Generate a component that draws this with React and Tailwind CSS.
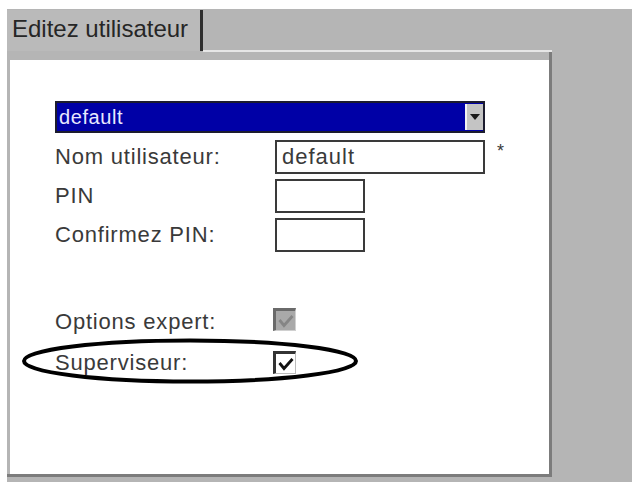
import React from 'react';

const font = { fontFamily: '"Liberation Sans", Arial, sans-serif' };

function Box({ className = '', children }) {
  return (
    <div className={`h-[34px] border-2 border-[#3a3a3a] bg-white flex items-center ${className}`}>
      {children}
    </div>
  );
}

function Check({ disabled }) {
  return (
    <div
      className={`w-[23px] h-[23px] border-t-[3px] border-l-[3px] border-r border-b ml-[-2px] flex items-center justify-center ${
        disabled ? 'bg-[#a9a9a9] border-t-[#6a6a6a] border-l-[#6a6a6a] border-r-[#d0d0d0] border-b-[#d0d0d0]' : 'bg-white border-t-[#333] border-l-[#333] border-r-[#bbb] border-b-[#bbb]'
      }`}
    >
      <svg width="16" height="14" viewBox="0 0 16 14">
        <path
          d="M1.5 6 L6 11.5 L14.5 2"
          fill="none"
          stroke={disabled ? '#858585' : '#111'}
          strokeWidth="2.8"
        />
      </svg>
    </div>
  );
}

export default function App() {
  return (
    <div className="w-[637px] h-[482px] bg-white overflow-hidden" style={font}>
      <div className="ml-[7px] mt-[9px] w-[625px] h-[473px] bg-[#b5b5b5]">
        {/* tab strip */}
        <div className="flex h-[43px]">
          <div className="w-[196px] h-[41px] mt-px border-r-[3px] border-[#2e2e2e] bg-[#bababa] pl-[5px] pt-[4px] text-[24px] leading-[30px] text-[#262626]">
            Editez utilisateur
          </div>
          <div className="w-[349px] border-b-2 border-[#e6e6e6]" />
        </div>

        {/* page */}
        <div className="w-[545px] h-[425px] pt-[8px] pl-[3px] border-r-[3px] border-b-[3px] border-[#7c7c7c]">
          <div className="relative w-full h-full bg-white pl-[45px] pt-[41px] text-[#3a3a3a]">
            <div className="w-[430px] h-[32px] bg-[#0000a6] border-2 border-[#1c1c2e] flex items-center">
              <span className="flex-1 pl-[2px] text-[20px] tracking-[0.6px] text-[#e8e8ff]">default</span>
              <div className="w-[18px] h-[26px] bg-[#c4c4c4] border-l-2 border-[#f2f2f2] flex items-center justify-center">
                <svg width="10" height="8" viewBox="0 0 10 8">
                  <path d="M0 1 H10 L5 7 Z" fill="#1a1a1a" />
                </svg>
              </div>
            </div>

            <div className="grid grid-cols-[220px_auto] items-center gap-y-[5px] mt-[7px] text-[22px] leading-[26px] tracking-[0.8px]">
              <div>Nom utilisateur:</div>
              <div className="flex items-start gap-[12px]">
                <Box className="w-[210px] pl-[5px] text-[22px] tracking-[1px]">default</Box>
                <span className="text-[18px] leading-[18px] mt-[2px]">*</span>
              </div>
              <div>PIN</div>
              <Box className="w-[90px]" />
              <div>Confirmez PIN:</div>
              <Box className="w-[90px]" />
            </div>

            <div className="grid grid-cols-[220px_auto] items-center gap-y-[18px] mt-[54px] text-[22px] leading-[23px] tracking-[0.8px]">
              <div className="mt-[4px]">Options expert:</div>
              <Check disabled />
              <div>Superviseur:</div>
              <Check />
            </div>

            {/* annotation ellipse */}
            <svg className="absolute left-[11px] top-[278px]" width="340" height="48" viewBox="0 0 340 48">
              <ellipse cx="169" cy="23" rx="166" ry="20.5" fill="none" stroke="#000" strokeWidth="4" />
            </svg>
          </div>
        </div>
      </div>
    </div>
  );
}
